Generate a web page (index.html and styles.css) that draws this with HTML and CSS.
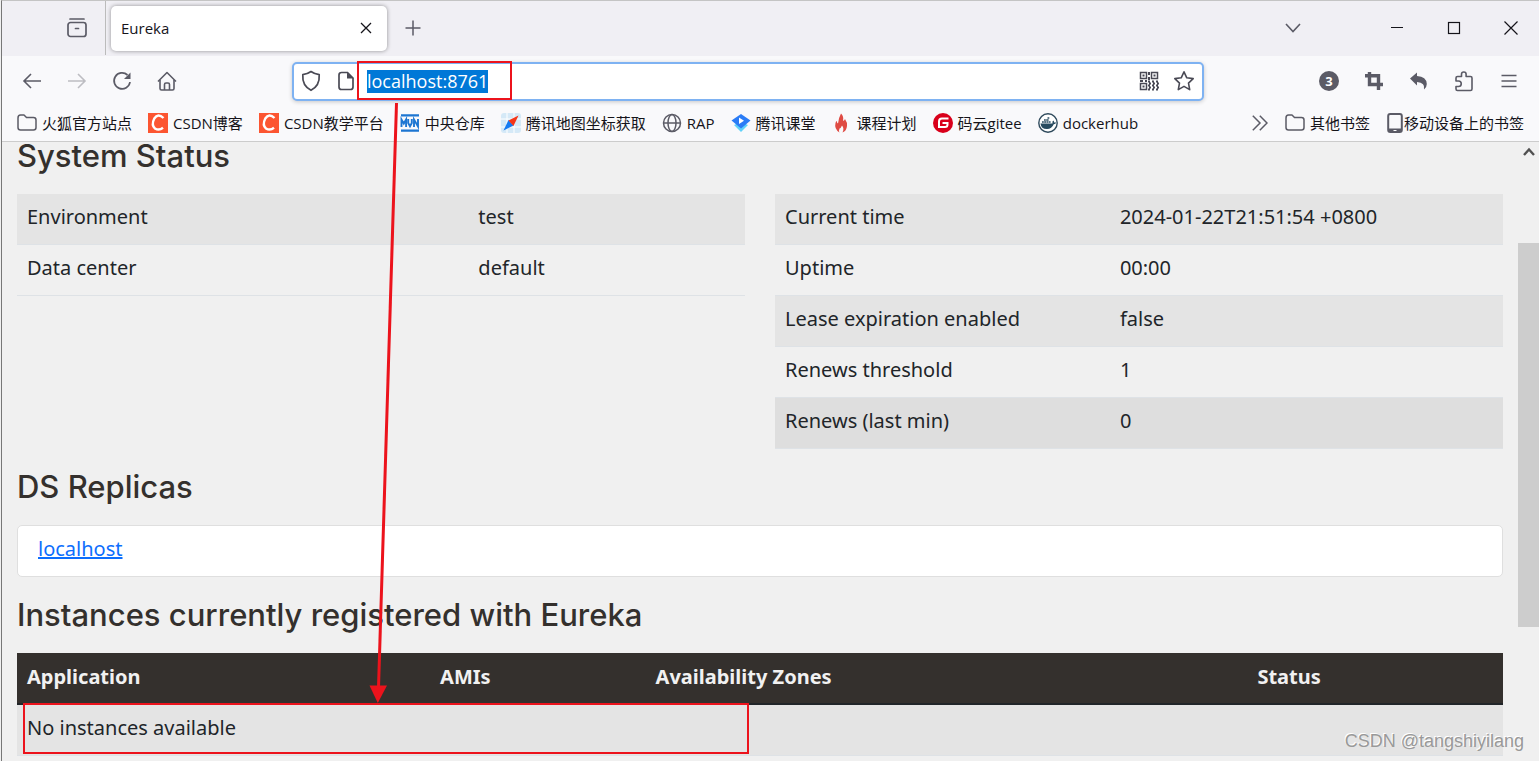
FILE: index.html
```html
<!DOCTYPE html>
<html lang="zh-CN">
<head>
<meta charset="utf-8">
<title>Eureka</title>
<link rel="stylesheet" href="styles.css">
</head>
<body>
<div class="window">
  <header class="chrome">
    <div class="tabbar">
      <div class="tabbar-start">
        <button class="icon-btn" aria-label="Recent browsing"><svg width="22" height="22" viewBox="0 0 22 22" fill="none" stroke="#5b5b66" stroke-width="1.7" stroke-linecap="round"><path d="M4 2h14"/><rect x="2" y="5.500" width="18" height="14" rx="2.500"/><path d="M9.500 11.500h3"/></svg></button>
      </div>
      <div class="tab"><span class="tab-title">Eureka</span><button class="icon-btn" aria-label="Close tab"><svg width="12" height="12" viewBox="0 0 12 12" stroke="#15141a" stroke-width="1.300"><path d="M1 1l10 10M11 1L1 11"/></svg></button></div>
      <button class="icon-btn new-tab" aria-label="New tab"><svg width="16" height="16" viewBox="0 0 16 16" stroke="#5b5b66" stroke-width="1.500"><path d="M8 .5v15M.5 8h15"/></svg></button>
      <div class="window-controls">
        <button class="icon-btn" aria-label="List tabs"><svg width="18" height="18" viewBox="0 0 18 18" fill="none" stroke="#5b5b66" stroke-width="1.600"><path d="M2 5l7 7.500L16 5"/></svg></button>
        <button class="icon-btn control-first" aria-label="Minimize"><svg width="14" height="14" viewBox="0 0 14 14" stroke="#15141a"><path d="M1 6.500h12"/></svg></button>
        <button class="icon-btn" aria-label="Maximize"><svg width="14" height="14" viewBox="0 0 14 14" fill="none" stroke="#15141a" stroke-width="1.200"><rect x="1.500" y="1.500" width="11" height="11"/></svg></button>
        <button class="icon-btn" aria-label="Close"><svg width="14" height="14" viewBox="0 0 14 14" stroke="#15141a" stroke-width="1.200"><path d="M.5.5l13 13M13.500.5l-13 13"/></svg></button>
      </div>
    </div>
    <nav class="navbar">
      <div class="nav-group">
        <button class="icon-btn" aria-label="Back"><svg width="20" height="20" viewBox="0 0 20 20" fill="none" stroke="#5b5b66" stroke-width="1.600"><path d="M19 10H2M9 3l-7 7 7 7"/></svg></button>
        <button class="icon-btn" aria-label="Forward"><svg width="20" height="20" viewBox="0 0 20 20" fill="none" stroke="#bdbdc2" stroke-width="1.600"><path d="M1 10h17M11 3l7 7-7 7"/></svg></button>
        <button class="icon-btn" aria-label="Reload"><svg width="20" height="20" viewBox="0 0 20 20" fill="none" stroke="#5b5b66" stroke-width="1.700"><path d="M18 11a8 8 0 1 1-2.500-7"/><path d="M18.500 1.500V8H12z" fill="#5b5b66" stroke="none"/></svg></button>
        <button class="icon-btn" aria-label="Home"><svg width="20" height="20" viewBox="0 0 20 20" fill="none" stroke="#5b5b66" stroke-width="1.600" stroke-linejoin="round"><path d="M1 10.500L10 1.500l9 9"/><path d="M3 9v8.500q0 1.500 1.500 1.500h11q1.500 0 1.500-1.500V9"/><path d="M7.500 19v-5.500q0-1.500 1.500-1.500h2q1.500 0 1.500 1.500V19"/></svg></button>
      </div>
      <div class="urlbar">
        <svg width="20" height="22" viewBox="0 0 20 22" fill="none" stroke="#4a4a55" stroke-width="1.700" stroke-linejoin="round"><path d="M10 1.500Q13.500 4 18.200 4.700 19 15.500 10 20.300 1 15.500 1.800 4.700 6.500 4 10 1.500z"/></svg>
        <svg class="page-icon" width="18" height="20" viewBox="0 0 18 20" fill="none" stroke="#4a4a55" stroke-width="1.700"><path d="M10.500 1.500H4.500q-2.500 0-2.500 2.500v12q0 2.500 2.500 2.500h9q2.500 0 2.500-2.500V7z"/><path d="M10 1.500V7.500h6.500z" fill="#4a4a55" stroke="none"/></svg>
        <input class="url" aria-label="Address" value="localhost:8761">
        <svg class="url-end" width="20" height="20" viewBox="0 0 20 20" fill="none" stroke="#4a4a55" stroke-width="1.500"><rect x="1.500" y="1.500" width="6" height="6"/><rect x="12.500" y="1.500" width="6" height="6"/><rect x="1.500" y="12.500" width="6" height="6"/><path d="M3.500 4.500h2M14.500 4.500h2M3.500 15.500h2M10 1v3M10 6v3M1 10h3M6 10h2" stroke-width="2"/><path d="M9 10.500h10M10 12.500h10M9 14.500h10M10 16.500h10M9 18.500h10" stroke-width="2" stroke-dasharray="2 2"/></svg>
        <svg width="22" height="22" viewBox="0 0 22 22" fill="none" stroke="#4a4a55" stroke-width="1.600" stroke-linejoin="round"><path d="M11 1.800l2.800 6 6.400.8-4.700 4.500 1.200 6.500L11 16.400l-5.700 3.200 1.200-6.500L1.800 8.600l6.400-.8z"/></svg>
      </div>
      <div class="nav-group nav-group-end">
        <button class="icon-btn" aria-label="Extension"><span class="count">3</span></button>
        <button class="icon-btn" aria-label="Crop"><svg width="20" height="20" viewBox="0 0 20 20" fill="none" stroke="#5b5b66" stroke-width="3.400"><path d="M5.500 1v12.500H19M1 4.700h13.500V19"/></svg></button>
        <button class="icon-btn" aria-label="Undo"><svg width="20" height="20" viewBox="0 0 20 20" fill="#5b5b66"><path d="M1 7.500L8 1.500V5q9.500.5 9.800 8 0 3.500-2.800 5.500 1.500-7-7-7.500v3.500z"/></svg></button>
        <button class="icon-btn" aria-label="Extensions"><svg width="20" height="22" viewBox="0 0 20 22" fill="none" stroke="#5b5b66" stroke-width="1.600" stroke-linejoin="round"><path d="M2 11V8q0-1.500 1.500-1.500H7.500V4.300a2.300 2.300 0 0 1 4.600 0V6.500h4.400Q18 6.500 18 8v11q0 1.500-1.500 1.500h-13Q2 20.500 2 19v-2.500h2.500a2.500 2.500 0 0 0 0-5.500z"/></svg></button>
        <button class="icon-btn" aria-label="Menu"><svg width="20" height="16" viewBox="0 0 20 16" stroke="#5b5b66" stroke-width="1.500"><path d="M2.500 2.500h15M2.500 8h15M2.500 13.500h15"/></svg></button>
      </div>
    </nav>
    <div class="bookmarks">
      <a class="bookmark" href="#"><svg width="20" height="20" viewBox="0 0 20 20" fill="none" stroke="#5b5b66" stroke-width="1.500" stroke-linejoin="round"><path d="M1 5q0-3 2.500-3H7l2.500 2.500H16.500Q19 4.500 19 7v7.500q0 2.500-2.500 2.500h-13Q1 17 1 14.500z"/></svg>火狐官方站点</a>
      <a class="bookmark" href="#"><svg width="20" height="20" viewBox="0 0 20 20"><path fill="#fc5531" d="M0 0h20v20H0z"/><path fill="none" stroke="#fff" stroke-width="2.400" d="M15.500 5Q10-.2 6.300 5.500 3 12 7 15.500q4 2.500 8-.7"/></svg>CSDN博客</a>
      <a class="bookmark" href="#"><svg width="20" height="20" viewBox="0 0 20 20"><path fill="#fc5531" d="M0 0h20v20H0z"/><path fill="none" stroke="#fff" stroke-width="2.400" d="M15.500 5Q10-.2 6.300 5.500 3 12 7 15.500q4 2.500 8-.7"/></svg>CSDN教学平台</a>
      <a class="bookmark" href="#"><svg width="20" height="20" viewBox="0 0 20 20" fill="none" stroke="#1d76d2" stroke-width="2.200"><path d="M1 2.300h18M1 17.700h18"/><path stroke-width="1.900" d="M1.500 14V6.500l2.300 4 2.300-4V14M8.200 6v4l1.800 3.300L11.800 10V6M14 14V6.500l4 7V6"/></svg>中央仓库</a>
      <a class="bookmark" href="#"><svg width="20" height="20" viewBox="0 0 20 20"><rect width="20" height="20" rx="3" fill="#d5e9f7"/><path d="M6 0v20M13 0v20M0 6h20M0 14h20" stroke="#fff"/><path d="M2.500 17.500L7.500 7l5 5.500z" fill="#167bf2"/><path d="M17.500 2.500l-10 5 5 5.500z" fill="#f53618"/></svg>腾讯地图坐标获取</a>
      <a class="bookmark" href="#"><svg width="20" height="20" viewBox="0 0 20 20" fill="none" stroke="#5b5b66" stroke-width="1.500"><circle cx="10" cy="10" r="8.500"/><ellipse cx="10" cy="10" rx="4" ry="8.500"/><path d="M1.500 10h17"/></svg>RAP</a>
      <a class="bookmark" href="#"><svg width="20" height="20" viewBox="0 0 20 20"><path d="M3 12l7 7 7-7-7-3z" fill="#5fd1fa"/><path d="M10 1l9.500 6.500L10 15.500.5 7.500z" fill="#2b7cf6"/><path d="M8 4.500v6.500l5-3.200z" fill="#fff"/></svg>腾讯课堂</a>
      <a class="bookmark" href="#"><svg width="20" height="20" viewBox="0 0 20 20" fill="#df4b43"><path d="M9 .5q3 3 2 7 1 1 2-1.500 2.500 3.500 2 7-.5 5-4.500 6.500 2-4-.5-7-1 2.500-2.500 3-1 2 0 4Q2 16 3.500 10q.5-2 1.200-2 .3 2 1.300 2.500Q6.500 5 9 .5z"/></svg>课程计划</a>
      <a class="bookmark" href="#"><svg width="20" height="20" viewBox="0 0 20 20"><circle cx="10" cy="10" r="10" fill="#d9001b"/><path d="M15.500 5.500H9q-3 0-3 3V14h6q2.500 0 2.500-2.500V10H9.500" fill="none" stroke="#fff" stroke-width="2"/></svg>码云gitee</a>
      <a class="bookmark" href="#"><svg width="20" height="20" viewBox="0 0 20 20"><circle cx="10" cy="10" r="9.200" fill="#fff" stroke="#2f4a5c" stroke-width="1.400"/><path d="M2.500 10.500h12q-.5-2 .7-3 1 .5 1 2h2q-.5 1.500-2.500 1.700-2 5-7 4.800-5.500 0-6.200-5.500z" fill="#284b60"/><path d="M4 9h9M6 7h5M9.500 5h2" stroke="#284b60" stroke-width="1.600" stroke-dasharray="1.800 .4"/></svg>dockerhub</a>
      <div class="bookmarks-end">
        <button class="icon-btn overflow" aria-label="More bookmarks"><svg width="16" height="16" viewBox="0 0 16 16" fill="none" stroke="#5b5b66" stroke-width="1.500"><path d="M.8.8L8 8 .8 15.200M7.800.8L15 8l-7.200 7.200"/></svg></button>
        <a class="bookmark" href="#"><svg width="20" height="20" viewBox="0 0 20 20" fill="none" stroke="#5b5b66" stroke-width="1.500" stroke-linejoin="round"><path d="M1 5q0-3 2.500-3H7l2.500 2.500H16.500Q19 4.500 19 7v7.500q0 2.500-2.500 2.500h-13Q1 17 1 14.500z"/></svg>其他书签</a>
        <a class="bookmark mobile" href="#"><svg width="16" height="20" viewBox="0 0 16 20"><rect x="1.200" y="1" width="13.600" height="18" rx="2" fill="none" stroke="#5b5b66" stroke-width="2"/><path fill="#5b5b66" d="M1 15.500h14v3.500H1z"/><path d="M6.500 17.500h3" stroke="#fff"/></svg>移动设备上的书签</a>
      </div>
    </div>
  </header>
  <div class="viewport">
    <main class="page">
      <h1 class="heading heading-top">System Status</h1>
      <div class="status">
        <table class="grid grid-env">
          <tr><td>Environment</td><td>test</td></tr>
          <tr><td>Data center</td><td>default</td></tr>
        </table>
        <table class="grid grid-info">
          <tr><td>Current time</td><td>2024-01-22T21:51:54 +0800</td></tr>
          <tr><td>Uptime</td><td>00:00</td></tr>
          <tr><td>Lease expiration enabled</td><td>false</td></tr>
          <tr><td>Renews threshold</td><td>1</td></tr>
          <tr class="hovered"><td>Renews (last min)</td><td>0</td></tr>
        </table>
      </div>
      <h1 class="heading">DS Replicas</h1>
      <ul class="replicas"><li><a href="#">localhost</a></li></ul>
      <h1 class="heading">Instances currently registered with Eureka</h1>
      <table class="grid instances">
        <thead><tr><th class="col-app">Application</th><th class="col-ami">AMIs</th><th class="col-zone">Availability Zones</th><th>Status</th></tr></thead>
        <tbody><tr><td colspan="4">No instances available</td></tr></tbody>
      </table>
    </main>
    <div class="scrollbar">
      <button class="icon-btn scroll-up" aria-label="Scroll up"><svg width="12" height="10" viewBox="0 0 12 10" fill="none" stroke="#505050" stroke-width="2.400"><path d="M1 8l5-5.500L11 8"/></svg></button>
      <div class="thumb"></div>
    </div>
  </div>
</div>
<svg class="annotations" width="1539" height="761" viewBox="0 0 1539 761" fill="none" stroke="#ec131c" stroke-width="2">
  <rect x="358" y="62" width="153" height="37"/>
  <rect x="24" y="704" width="724" height="49"/>
  <path d="M396.500 103L378.500 688" stroke-width="3"/>
  <path d="M369.500 685.500h17.500l-9.200 17.500z" fill="#ec131c" stroke="none"/>
</svg>
<div class="watermark">CSDN @tangshiyilang</div>
</body>
</html>
```
FILE: styles.css
```css
* { box-sizing: border-box; }

body {
  margin: 0;
  position: relative;
  height: 100vh;
  overflow: hidden;
  background: #f0f0f0;
  color: #212529;
  font-family: "Noto Sans", "Noto Sans CJK SC", sans-serif;
}

.window {
  display: flex;
  flex-direction: column;
  height: 100vh;
  margin-left: 1px;
  border-left: 1px solid #777;
  border-top: 1px solid #c4c4c4;
}

.icon-btn {
  display: flex;
  align-items: center;
  justify-content: center;
  padding: 0;
  border: 0;
  background: none;
}

.chrome {
  flex: none;
  background: #f9f9fb;
  border-bottom: 1px solid #ccc;
  color: #15141a;
  font-family: "Open Sans", "Noto Sans CJK SC", sans-serif;
  font-size: 15px;
}

.tabbar {
  display: flex;
  align-items: center;
  height: 55px;
  padding-bottom: 1px;
  background: #f0eff4;
}

.tabbar-start {
  display: flex;
  justify-content: flex-end;
  align-items: center;
  width: 104px;
  height: 54px;
  padding-right: 17px;
  border-right: 1px solid #bbb;
}

.tab {
  display: flex;
  align-items: center;
  justify-content: space-between;
  width: 276px;
  height: 45px;
  margin-left: 5px;
  padding: 0 15px 0 10px;
  border-radius: 5px;
  background: #fff;
  box-shadow: 0 0 4px rgba(0, 0, 0, 0.4);
}

.new-tab { margin-left: 18px; }

.window-controls {
  display: flex;
  align-items: center;
  gap: 43px;
  margin-left: auto;
  padding-right: 21px;
}

.control-first { margin-left: 45px; }

.navbar {
  display: flex;
  align-items: center;
  height: 50px;
  padding: 0 20px;
}

.nav-group {
  display: flex;
  flex: 270 1 0;
  gap: 25px;
}

.nav-group-end {
  flex: 315 1 0;
  justify-content: flex-end;
  align-items: center;
}

.urlbar {
  display: flex;
  flex: 894 1 0;
  align-items: center;
  height: 39px;
  padding: 0 7px;
  border: 2px solid #7eb2f2;
  border-radius: 5px;
  background: #fff;
  box-shadow: 0 1px 4px rgba(0, 0, 0, 0.2);
}

.page-icon { margin-left: 16px; }

.url {
  field-sizing: content;
  height: 23px;
  margin-left: 12px;
  padding: 0;
  border: 0;
  outline: 0;
  background: #0078d7;
  color: #fff;
  font: 18px/23px "Open Sans", sans-serif;
}

.url-end { margin: 0 14px 0 auto; }

.count {
  width: 20px;
  height: 20px;
  border-radius: 50%;
  background: #5b5b66;
  color: #fff;
  font: bold 13px/20px "Open Sans", sans-serif;
}

.bookmarks {
  display: flex;
  align-items: center;
  gap: 16px;
  height: 35px;
  padding: 0 15px 2px;
  white-space: nowrap;
}

.bookmark {
  display: flex;
  align-items: center;
  gap: 5px;
  color: inherit;
  text-decoration: none;
}

.mobile { gap: 1px; }

.bookmarks-end {
  display: flex;
  align-items: center;
  gap: 17px;
  margin-left: auto;
}

.viewport {
  display: flex;
  flex: 1;
  min-height: 0;
}

.page {
  flex: 1;
  overflow: hidden;
  padding: 0 15px;
}

.heading {
  margin: 20px 0;
  color: #34302d;
  font: 500 31px/36px Inter, sans-serif;
}

.heading-top {
  margin: 0 0 24px;
  line-height: 28px;
}

.status {
  display: grid;
  grid-template-columns: 1fr 1fr;
  align-items: start;
  gap: 30px;
}

.grid {
  width: 100%;
  border-collapse: separate;
  border-spacing: 0;
  table-layout: fixed;
  font-size: 20px;
  line-height: 30px;
}

.grid td {
  padding: 8px 10px 12px;
  border-bottom: 1px solid #dee2e6;
}

.grid tr:nth-child(odd) td { background: #e4e4e4; }
.grid .hovered:nth-child(odd) td { background: #dedede; }
.grid-env td:first-child { width: 62%; }
.grid-info td:first-child { width: 46%; }

.grid th {
  padding: 9px 10px 11px;
  border-bottom: 2px solid #212529;
  background: #34302d;
  color: #f1f1f1;
  text-align: left;
}

.grid .col-app { width: 27.8%; }
.grid .col-ami { width: 14.5%; }
.grid .col-zone { width: 40.5%; }

.replicas {
  margin: 0;
  padding: 8px 20px 12px;
  border: 1px solid #dfdfdf;
  border-radius: 5px;
  background: #fff;
  list-style: none;
  font-size: 20px;
  line-height: 30px;
}

.replicas a { color: #0d6efd; }

.scrollbar {
  flex: none;
  width: 21px;
  background: #f0f0f0;
}

.scroll-up {
  width: 21px;
  height: 20px;
}

.thumb {
  height: 62%;
  margin-top: 81px;
  background: #cdcdcd;
}

.annotations {
  position: absolute;
  top: 0;
  left: 0;
  pointer-events: none;
}

.watermark {
  position: absolute;
  right: 15px;
  bottom: 8px;
  color: #999;
  font: 18px/24px "Liberation Sans", sans-serif;
  text-shadow: -1px -1px 0 #fff;
}
```
